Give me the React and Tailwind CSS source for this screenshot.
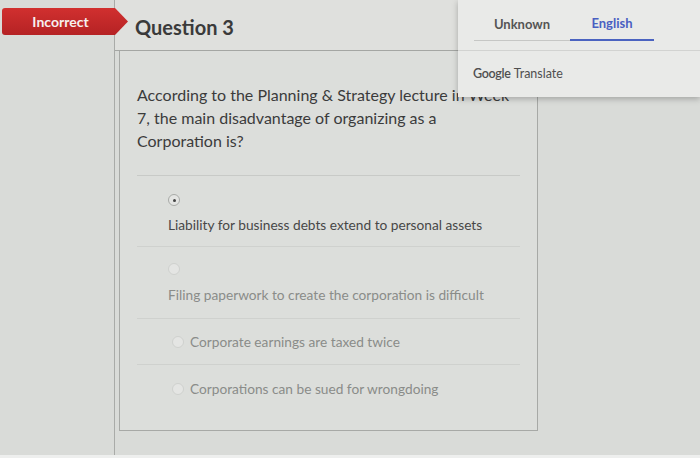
import React from 'react';

function Radio({ checked, faint }) {
  return (
    <span
      className={`flex h-[12px] w-[12px] shrink-0 items-center justify-center rounded-full border ${
        faint ? 'border-[#cfd1ce]' : 'border-[#a9aba8]'
      } bg-[#e4e5e3]`}
    >
      {checked && <span className="h-[3px] w-[3px] rounded-full bg-[#444]" />}
    </span>
  );
}

export default function App() {
  return (
    <div
      className="relative flex h-[458px] w-[700px] flex-col overflow-hidden bg-[#d9dbd8]"
      style={{ fontFamily: 'Lato, "Open Sans", sans-serif' }}
    >
      <div className="flex h-[455px]">
        {/* left gutter */}
        <div className="w-[114px] shrink-0" />

        {/* main panel */}
        <div className="flex flex-1 flex-col border-l border-[#a9aba8]">
          <div className="flex h-[51px] items-center border-b border-[#a4a6a3] bg-[#dfe0dd] pt-[3px] pl-[20px]">
            <h1 className="text-[20px] font-bold text-[#3a3a3a]">Question 3</h1>
          </div>

          <div className="ml-[4px] flex h-[380px] w-[419px] flex-col border-r border-b border-l border-[#a7a9a6] bg-[#dcdedb]">
            <p className="w-[390px] pt-[32px] pl-[17px] text-[16px] leading-[23px] text-[#3b3b3b]">
              According to the Planning &amp; Strategy lecture in Week 7, the main disadvantage of organizing as a
              Corporation is?
            </p>

            <div className="mx-[17px] mt-[23px] border-t border-[#c8cac7]" />

            <div className="flex h-[70px] flex-col pt-[18px] pl-[48px]">
              <Radio checked />
              <span className="mt-[10px] text-[13.7px] leading-[18px] text-[#474747]">
                Liability for business debts extend to personal assets
              </span>
            </div>

            <div className="mx-[17px] border-t border-[#cfd1ce]" />

            <div className="flex h-[71px] flex-col pt-[16px] pl-[48px]">
              <Radio faint />
              <span className="mt-[11px] text-[13.7px] leading-[18px] text-[#8a8c89]">
                Filing paperwork to create the corporation is difficult
              </span>
            </div>

            <div className="mx-[17px] border-t border-[#cfd1ce]" />

            <div className="flex h-[45px] items-center gap-[6px] pl-[52px]">
              <Radio faint />
              <span className="text-[13.7px] leading-[18px] text-[#8a8c89]">Corporate earnings are taxed twice</span>
            </div>

            <div className="mx-[17px] border-t border-[#cfd1ce]" />

            <div className="flex h-[48px] items-center gap-[6px] pl-[52px]">
              <Radio faint />
              <span className="text-[13.7px] leading-[18px] text-[#8a8c89]">Corporations can be sued for wrongdoing</span>
            </div>
          </div>
        </div>
      </div>

      <div className="flex-1 bg-[#eeefee]" />

      {/* Incorrect badge */}
      <div className="absolute top-[8px] left-[2px] flex h-[27px] w-[126px] items-center justify-center rounded-l-[3px] bg-gradient-to-b from-[#d1302f] to-[#b52224] pr-[9px] [clip-path:polygon(0_0,113px_0,126px_50%,113px_100%,0_100%)]">
        <span className="text-[14px] font-bold text-[#f6f0ef]">Incorrect</span>
      </div>

      {/* translate popup */}
      <div className="absolute top-0 left-[458px] flex h-[97px] w-[242px] flex-col bg-[#e9eae8] shadow-[0_2px_6px_rgba(0,0,0,0.25)]">
        <div className="flex h-[51px] border-b border-[#d2d3d1] pl-[16px]">
          <div className="flex h-[41px] w-[96px] items-center justify-center border-b border-[#c6c7c5] pt-[9px] text-[13px] font-bold text-[#555]">
            Unknown
          </div>
          <div className="flex h-[41px] w-[84px] items-center justify-center border-b-2 border-[#4a63c0] pt-[9px] text-[13px] font-bold text-[#4a5fc2]">
            English
          </div>
        </div>
        <div className="flex flex-1 items-center pl-[15px] text-[12.5px] text-[#4f4f4f]">
          <span className="font-semibold tracking-[-0.3px]">Google</span>
          <span className="ml-[3px]">Translate</span>
        </div>
      </div>
    </div>
  );
}
